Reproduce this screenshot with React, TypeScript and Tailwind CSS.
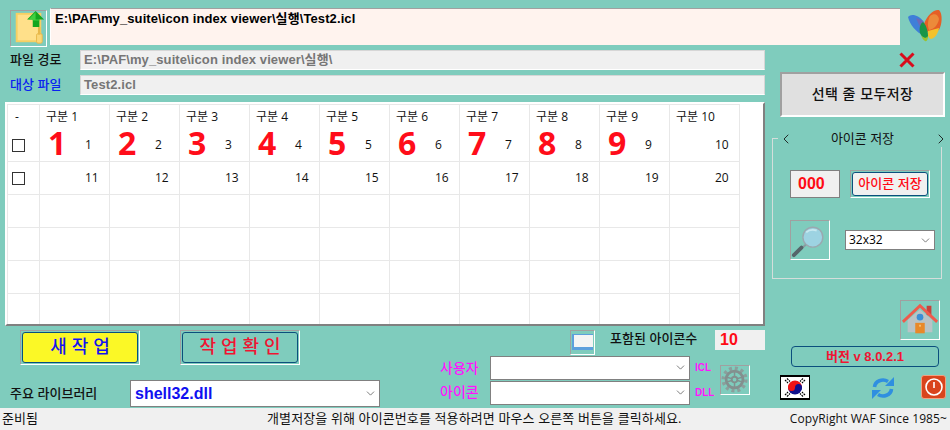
import { ChevronDown, ChevronLeft, ChevronRight } from "lucide-react";

const uiFont = "font-['Open_Sans','Noto_Sans_CJK_KR',sans-serif]";
const boldFont = "font-['Liberation_Sans','Noto_Sans_CJK_KR',sans-serif] font-bold";
const labelFont = "font-['Liberation_Sans','Noto_Sans_CJK_KR',sans-serif] font-medium";
const insetFrame = "border border-t-[#a0a0a0] border-l-[#a0a0a0] border-r-white border-b-white";

const COLUMNS = [1, 2, 3, 4, 5, 6, 7, 8, 9, 10];
const EMPTY_ROWS = [0, 1, 2, 3];

function FolderUpIcon() {
  return (
    <svg viewBox="0 0 37 37" className="size-[35px]">
      <rect x="5" y="2" width="27" height="31" fill="#f6cf63" />
      <rect x="7" y="4" width="23" height="27" fill="#ffe08a" />
      <rect x="27" y="24" width="6" height="10" rx="1.5" fill="#fbd778" stroke="#e8b84a" />
      <rect x="28.5" y="17" width="2.5" height="8" fill="#e8b84a" />
      <path d="M26 0 L35 9 L30 9 L30 17 L23 17 L23 9 L17 9 Z" fill="#13a61f" />
      <path d="M26 1 L18.5 9 L23 9 L23 10 L30 10 L30 9 L26 9 Z" fill="#3fd03f" />
    </svg>
  );
}

function ButterflyIcon() {
  return (
    <svg viewBox="0 0 50 50" className="h-[50px] w-[50px]">
      <path d="M8 12 C11 8 19 10 24 17 C23 21 23 26 24 31 C16 27 10 20 8 12 Z" fill="#3f7fd8" />
      <path d="M16 13 C20 14 23 16 25 19 L24 29 C21 24 18 18 16 13 Z" fill="#6f68b8" />
      <path d="M24 19 C27 10 34 4 39 5 C43 9 42 20 39 25 L29 29 C26 26 25 22 24 19 Z" fill="#e65f26" />
      <path d="M30 11 C34 8 38 9 39 14 C38 20 34 24 29 25 C27 20 28 15 30 11 Z" fill="#ec8a3a" />
      <path d="M28 26 L39 23 C38 29 35 33 31 34 C28 33 27 29 28 26 Z" fill="#f3c22c" />
      <path d="M23 17 C27 21 28 27 28 32 C26 35 22 33 20 28 C19 23 20 19 23 17 Z" fill="#189548" />
      <path d="M21 30 C23 33 26 34 28 31 C28 34 27 37 25 36 C23 35 22 33 21 30 Z" fill="#9ac130" />
    </svg>
  );
}

function CloseMark() {
  return (
    <svg viewBox="0 0 16 16" className="size-[16px]">
      <path d="M1.5 1.5 L14.5 14.5 M14.5 1.5 L1.5 14.5" stroke="#d80c1c" strokeWidth="3" />
    </svg>
  );
}

function MagnifierIcon() {
  return (
    <svg viewBox="0 0 40 40" className="size-[38px]">
      <circle cx="23" cy="17" r="10.5" fill="#9dd3e2" stroke="#9aa9b0" strokeWidth="1.5" />
      <path d="M16 12 Q20 8 27 10" stroke="#c8e9f0" strokeWidth="2" fill="none" />
      <path d="M15.5 25 L11 29" stroke="#8a9aa0" strokeWidth="2" />
      <path d="M11 28 L3 36" stroke="#56656a" strokeWidth="4" strokeLinecap="round" />
    </svg>
  );
}

function HouseIcon() {
  return (
    <svg viewBox="0 0 40 40" className="size-[38px]">
      <rect x="27" y="5" width="5" height="10" fill="#c9413a" />
      <path d="M7 20 L20 9 L33 20 L33 33 L7 33 Z" fill="#b9c3c6" />
      <path d="M2 22 L20 5 L38 22" stroke="#ef5a4c" strokeWidth="3" fill="none" />
      <circle cx="20" cy="17" r="3.5" fill="#3b8fd6" />
      <rect x="15" y="23" width="10" height="11" fill="#e8892a" />
      <rect x="19" y="25" width="2" height="2" fill="#f8c070" />
    </svg>
  );
}

function GearIcon() {
  return (
    <svg viewBox="0 0 30 30" className="size-[28px]">
      <circle cx="14.5" cy="14.5" r="12" fill="none" stroke="#8b9f9c" strokeWidth="4" strokeDasharray="3.2 3.08" />
      <circle cx="14.5" cy="14.5" r="9" fill="none" stroke="#83908f" strokeWidth="3" />
      <circle cx="14.5" cy="14.5" r="3" fill="none" stroke="#83908f" strokeWidth="2" />
      <path d="M14.5 6 V11 M14.5 18 V23 M6.5 12 L11.5 13.5 M17.5 15.5 L22.5 17 M6.5 17 L11.5 15.5 M17.5 13.5 L22.5 12" stroke="#83908f" strokeWidth="1.6" />
    </svg>
  );
}

function FlagIcon() {
  return (
    <div className="h-[25px] w-[30px] border-y-[2px] border-x-[1px] border-black bg-white">
      <svg viewBox="0 0 28 21" className="size-full">
        <path d="M7 10.5 A7 7 0 0 1 21 10.5 Z" fill="#f01414" />
        <path d="M7 10.5 A7 7 0 0 0 21 10.5 Z" fill="#10108c" />
        <circle cx="10.5" cy="10.5" r="3.5" fill="#f01414" />
        <circle cx="17.5" cy="10.5" r="3.5" fill="#10108c" />
        <path d="M4 3 L7 6 M6 1.5 L9 4.5 M24 3 L21 6 M22 1.5 L19 4.5 M4 18 L7 15 M6 19.5 L9 16.5 M24 18 L21 15 M22 19.5 L19 16.5" stroke="#000" strokeWidth="1.2" strokeDasharray="2 0.8" />
      </svg>
    </div>
  );
}

function RefreshIcon() {
  return (
    <svg viewBox="0 0 22 22" className="size-[22px]">
      <path d="M2.5 10 A8.5 7.5 0 0 1 16 4.5" stroke="#2f8fe0" strokeWidth="3.6" fill="none" />
      <path d="M13 9 L22 9 L22 0 Z" fill="#2f8fe0" />
      <path d="M19.5 12 A8.5 7.5 0 0 1 6 17.5" stroke="#2f8fe0" strokeWidth="3.6" fill="none" />
      <path d="M9 13 L0 13 L0 22 Z" fill="#2f8fe0" />
    </svg>
  );
}

function PowerIcon() {
  return (
    <div className="flex h-[24px] w-[25px] items-center justify-center rounded-[3px] border border-[#f0a080] bg-[#d9441c]">
      <svg viewBox="0 0 20 20" className="size-[20px]">
        <circle cx="10" cy="10" r="8" fill="none" stroke="#fff" strokeWidth="1.6" />
        <path d="M10 5 V11" stroke="#fff" strokeWidth="1.6" />
      </svg>
    </div>
  );
}

function WindowIcon() {
  return (
    <svg viewBox="0 0 23 23" className="size-[23px]">
      <rect x="1" y="3" width="21" height="16" fill="#5d9fdc" />
      <rect x="3" y="4" width="19" height="12" fill="#f4f4f4" />
    </svg>
  );
}

function PathField({ children }: { children: string }) {
  return (
    <div className="flex h-[20px] w-[685px] items-center border border-[#d6d6d6] border-b-white border-r-[#d6d6d6] bg-[#f0f0f0] pl-[3px] font-['Liberation_Sans','Noto_Sans_CJK_KR',sans-serif] text-[13px] font-bold tracking-[0.1px] text-[#767676]">
      {children}
    </div>
  );
}

function Combo({ className, children }: { className: string; children?: string }) {
  return (
    <div className={`flex items-center justify-between border border-[#808080] bg-white pr-[2px] ${className}`}>
      <span>{children}</span>
      <ChevronDown className="size-[13px] text-[#606060]" strokeWidth={1.5} />
    </div>
  );
}

function FramedButton({ fill, textColor, label }: { fill: string; textColor: string; label: string }) {
  return (
    <div className={`h-[35px] w-[120px] p-[1px] ${insetFrame}`}>
      <div className={`flex h-full items-center justify-center rounded-[3px] border border-[#0b4f7d] text-[18px] ${labelFont} ${fill} ${textColor}`}>
        {label}
      </div>
    </div>
  );
}

function IconGrid() {
  return (
    <div className={`ml-[5px] mt-[7px] h-[224px] w-[760px] overflow-hidden border-2 border-white border-r-[#808080] border-b-[#808080] bg-white text-[12px] text-[#111] ${uiFont}`}>
      <div className="w-[733px] border-l border-t border-[#e8e8e8]">
        <div className="flex h-[24px]">
          <div className="flex w-[32px] items-center border-r border-[#e8e8e8] pl-[7px]">-</div>
          {COLUMNS.map((n) => (
            <div key={n} className="flex w-[70px] items-center border-r border-[#e8e8e8] pl-[6px]">
              구분 {n}
            </div>
          ))}
        </div>
        {[0, 10].map((offset) => (
          <div key={offset} className="flex h-[33px] border-b border-[#e8e8e8]">
            <div className="flex w-[32px] items-center border-r border-[#e8e8e8] pl-[4px]">
              <div className="size-[13px] border border-[#333] bg-white" />
            </div>
            {COLUMNS.map((n) => (
              <div key={n} className="flex w-[70px] items-center border-r border-[#e8e8e8]">
                <span className="mb-[4px] h-[24px] w-[45px] pl-[8px] font-['Open_Sans',sans-serif] text-[32px] font-bold leading-[24px] text-[#ff0d1a]">
                  {offset === 0 && n < 10 ? n : ""}
                </span>
                <span>{n + offset}</span>
              </div>
            ))}
          </div>
        ))}
        {EMPTY_ROWS.map((row) => (
          <div key={row} className="flex h-[33px] border-b border-[#e8e8e8]">
            <div className="w-[32px] border-r border-[#e8e8e8]" />
            {COLUMNS.map((n) => (
              <div key={n} className="w-[70px] border-r border-[#e8e8e8]" />
            ))}
          </div>
        ))}
      </div>
    </div>
  );
}

function SavePanel() {
  return (
    <div className="relative mt-[21px] h-[141px] w-[170px] border border-[#d4dedb]">
      <div className={`absolute left-[5px] top-[-9px] flex h-[17px] w-[174px] items-center justify-between bg-[#7fccbd] text-[13px] text-[#111] ${uiFont}`}>
        <ChevronLeft className="size-[16px]" strokeWidth={1.3} />
        <span className="mr-[2px]">아이콘 저장</span>
        <ChevronRight className="mr-[3px] size-[16px]" strokeWidth={1.3} />
      </div>
      <div className="flex items-start pl-[17px] pt-[31px]">
        <div className={`flex h-[28px] w-[50px] items-center border border-[#808080] bg-[#f0f0f0] pl-[7px] text-[16px] text-[#ff0a14] ${boldFont}`}>
          000
        </div>
        <div className={`ml-[10px] h-[28px] w-[80px] p-[1px] ${insetFrame}`}>
          <div className={`flex h-full items-center justify-center rounded-[3px] border border-[#0b4f7d] bg-[#f0f0f0] text-[13px] text-[#ff0a14] ${labelFont}`}>
            아이콘 저장
          </div>
        </div>
      </div>
      <div className="mt-[22px] flex items-center pl-[17px]">
        <div className={`flex size-[40px] items-center justify-center ${insetFrame}`}>
          <MagnifierIcon />
        </div>
        <Combo className={`ml-[15px] h-[20px] w-[90px] pl-[3px] text-[12px] text-black ${uiFont}`}>32x32</Combo>
      </div>
    </div>
  );
}

export default function App() {
  return (
    <div className="flex h-[430px] w-[950px] flex-col overflow-hidden bg-[#7fccbd]">
      <div className="flex h-[47px] items-start pl-[10px] pt-[8px]">
        <div className={`mt-[2px] flex size-[37px] items-center justify-center ${insetFrame}`}>
          <FolderUpIcon />
        </div>
        <div className="ml-[3px] h-[37px] w-[850px] border-t border-l border-t-[#a0a0a0] border-l-white bg-[#fff3ee] pl-[4px] font-['Liberation_Sans','Noto_Sans_CJK_KR',sans-serif] text-[13px] font-bold tracking-[0.1px] text-black">
          E:\PAF\my_suite\icon index viewer\실행\Test2.icl
        </div>
        <div className="-mt-[3px]">
          <ButterflyIcon />
        </div>
      </div>

      <div className="flex h-[361px]">
        <div className="w-[772px]">
          <div className="mt-[3px] flex items-center pl-[10px]">
            <span className={`w-[70px] text-[13px] text-[#111] ${labelFont}`}>파일 경로</span>
            <PathField>E:\PAF\my_suite\icon index viewer\실행\</PathField>
          </div>
          <div className="mt-[5px] flex items-center pl-[10px]">
            <span className={`w-[70px] text-[13px] text-[#0a22f0] ${labelFont}`}>대상 파일</span>
            <PathField>Test2.icl</PathField>
          </div>

          <IconGrid />

          <div className="flex">
            <div className="w-[440px]">
              <div className="mt-[4px] flex gap-[40px] pl-[20px]">
                <FramedButton fill="bg-[#fbf826]" textColor="text-[#1414f0]" label="새 작 업" />
                <FramedButton fill="bg-[#7fccbd]" textColor="text-[#f01432]" label="작 업 확 인" />
              </div>
              <div className="mt-[15px] flex items-center pl-[10px]">
                <span className={`w-[120px] text-[13px] text-[#111] ${labelFont}`}>주요 라이브러리</span>
                <Combo className={`h-[27px] w-[250px] pl-[4px] text-[16px] text-[#1010f0] ${boldFont}`}>shell32.dll</Combo>
              </div>
            </div>

            <div className="mt-[4px] w-[325px]">
              <div className="flex h-[25px] items-start">
                <div className={`ml-[130px] flex size-[25px] items-center justify-center ${insetFrame}`}>
                  <WindowIcon />
                </div>
                <span className={`ml-[15px] w-[105px] text-[13px] leading-[18px] text-[#111] ${labelFont}`}>포함된 아이콘수</span>
                <div className={`flex h-[20px] w-[50px] items-center bg-[#f0f0f0] pl-[5px] text-[16px] text-[#ff0a14] ${boldFont}`}>10</div>
              </div>
              <div className="flex items-center">
                <div className={`w-[50px] text-[14px] leading-[24px] text-[#ff14ff] ${labelFont}`}>
                  <div>사용자</div>
                  <div>아이콘</div>
                </div>
                <div className="w-[200px]">
                  <Combo className="h-[24px] w-[200px]" />
                  <Combo className="mt-[1px] h-[24px] w-[200px]" />
                </div>
                <div className={`ml-[5px] w-[25px] text-[10px] leading-[25px] text-[#ff14ff] ${boldFont}`}>
                  <div>ICL</div>
                  <div>DLL</div>
                </div>
                <div className={`flex size-[30px] items-center justify-center ${insetFrame}`}>
                  <GearIcon />
                </div>
              </div>
            </div>
          </div>
        </div>

        <div className="flex flex-1 flex-col">
          <div className="flex h-[25px] justify-end pr-[35px] pt-[5px]">
            <CloseMark />
          </div>
          <div className={`ml-[8px] flex h-[45px] w-[165px] items-center justify-center border-2 border-[#a0a0a0] border-r-white border-b-white bg-[#e0e0e0] text-[14px] tracking-[0.4px] text-[#111] ${labelFont}`}>
            선택 줄 모두저장
          </div>
          <SavePanel />
          <div className={`ml-[128px] mt-[21px] flex size-[40px] items-center justify-center ${insetFrame}`}>
            <HouseIcon />
          </div>
          <div className={`ml-[19px] mt-[6px] flex h-[21px] w-[148px] items-center justify-center rounded-[4px] border border-[#0b4f7d] text-[13px] text-[#f01432] ${boldFont}`}>
            버전 v 8.0.2.1
          </div>
          <div className="ml-[8px] mt-[8px] flex items-start">
            <FlagIcon />
            <div className="ml-[62px] mt-[2px]">
              <RefreshIcon />
            </div>
            <div className="ml-[27px]">
              <PowerIcon />
            </div>
          </div>
        </div>
      </div>

      <div className={`flex h-[22px] items-center bg-[#f0f0f0] pl-[2px] pr-[3px] text-[12px] text-[#111] ${uiFont}`}>
        <span className="w-[265px] text-[13px]">준비됨</span>
        <span className="text-[13px] tracking-[0.12px]">개별저장을 위해 아이콘번호를 적용하려면 마우스 오른쪽 버튼을 클릭하세요.</span>
        <span className="ml-auto tracking-[0.1px]">CopyRight WAF Since 1985~</span>
      </div>
    </div>
  );
}
